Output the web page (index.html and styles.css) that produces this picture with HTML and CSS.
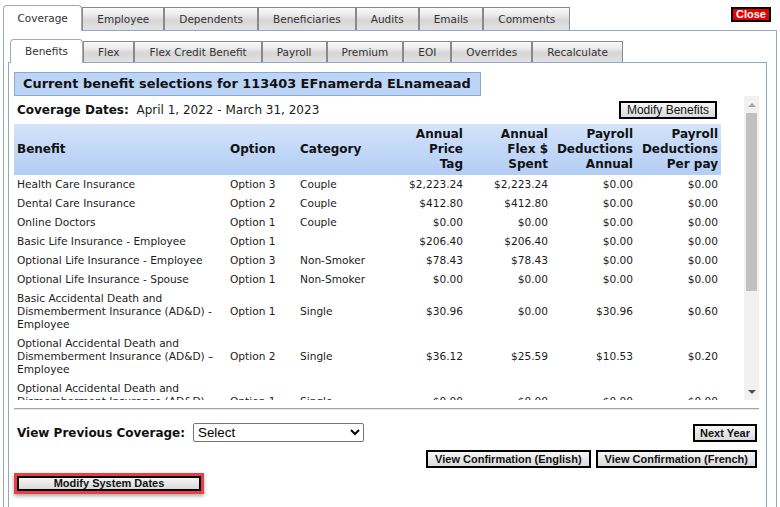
FILE: index.html
```html
<!DOCTYPE html>
<html lang="en">
<head>
<meta charset="utf-8">
<title>Coverage - Benefits</title>
<link rel="stylesheet" href="styles.css">
</head>
<body>
<div class="page">
  <div class="top-row">
    <nav class="tabs outer-tabs">
      <span class="tab active">Coverage</span>
      <span class="tab">Employee</span>
      <span class="tab">Dependents</span>
      <span class="tab">Beneficiaries</span>
      <span class="tab">Audits</span>
      <span class="tab">Emails</span>
      <span class="tab">Comments</span>
    </nav>
    <button class="close">Close</button>
  </div>
  <div class="outer-panel">
    <nav class="tabs inner-tabs">
      <span class="tab active">Benefits</span>
      <span class="tab">Flex</span>
      <span class="tab">Flex Credit Benefit</span>
      <span class="tab">Payroll</span>
      <span class="tab">Premium</span>
      <span class="tab">EOI</span>
      <span class="tab">Overrides</span>
      <span class="tab">Recalculate</span>
    </nav>
    <div class="inner-panel">
      <div class="title">Current benefit selections for 113403 EFnamerda ELnameaad</div>
      <div class="scroll-wrap">
        <div class="scroll">
          <div class="dates-row">
            <span class="dates"><b>Coverage Dates:</b>&nbsp; April 1, 2022 - March 31, 2023</span>
            <button class="btn btn-normal">Modify Benefits</button>
          </div>
          <table class="benefits">
            <colgroup>
              <col class="c-benefit"><col class="c-option"><col class="c-category">
              <col class="c-num"><col class="c-num"><col class="c-num"><col class="c-num">
            </colgroup>
            <thead>
              <tr>
                <th class="left">Benefit</th>
                <th class="left">Option</th>
                <th class="left">Category</th>
                <th>Annual<br>Price<br>Tag</th>
                <th>Annual<br>Flex $<br>Spent</th>
                <th>Payroll<br>Deductions<br>Annual</th>
                <th>Payroll<br>Deductions<br>Per pay</th>
              </tr>
            </thead>
            <tbody>
              <tr><td>Health Care Insurance</td><td>Option 3</td><td>Couple</td><td class="num">$2,223.24</td><td class="num">$2,223.24</td><td class="num">$0.00</td><td class="num">$0.00</td></tr>
              <tr><td>Dental Care Insurance</td><td>Option 2</td><td>Couple</td><td class="num">$412.80</td><td class="num">$412.80</td><td class="num">$0.00</td><td class="num">$0.00</td></tr>
              <tr><td>Online Doctors</td><td>Option 1</td><td>Couple</td><td class="num">$0.00</td><td class="num">$0.00</td><td class="num">$0.00</td><td class="num">$0.00</td></tr>
              <tr><td>Basic Life Insurance - Employee</td><td>Option 1</td><td></td><td class="num">$206.40</td><td class="num">$206.40</td><td class="num">$0.00</td><td class="num">$0.00</td></tr>
              <tr><td>Optional Life Insurance - Employee</td><td>Option 3</td><td>Non-Smoker</td><td class="num">$78.43</td><td class="num">$78.43</td><td class="num">$0.00</td><td class="num">$0.00</td></tr>
              <tr><td>Optional Life Insurance - Spouse</td><td>Option 1</td><td>Non-Smoker</td><td class="num">$0.00</td><td class="num">$0.00</td><td class="num">$0.00</td><td class="num">$0.00</td></tr>
              <tr><td>Basic Accidental Death and Dismemberment Insurance (AD&amp;D) - Employee</td><td>Option 1</td><td>Single</td><td class="num">$30.96</td><td class="num">$0.00</td><td class="num">$30.96</td><td class="num">$0.60</td></tr>
              <tr><td>Optional Accidental Death and Dismemberment Insurance (AD&amp;D) – Employee</td><td>Option 2</td><td>Single</td><td class="num">$36.12</td><td class="num">$25.59</td><td class="num">$10.53</td><td class="num">$0.20</td></tr>
              <tr><td>Optional Accidental Death and Dismemberment Insurance (AD&amp;D) – Spouse</td><td>Option 1</td><td>Single</td><td class="num">$0.00</td><td class="num">$0.00</td><td class="num">$0.00</td><td class="num">$0.00</td></tr>
              <tr><td>Optional Accidental Death and Dismemberment Insurance (AD&amp;D) – Child</td><td>Option 1</td><td>Single</td><td class="num">$0.00</td><td class="num">$0.00</td><td class="num">$0.00</td><td class="num">$0.00</td></tr>
              <tr><td>Long Term Disability</td><td>Option 1</td><td>Single</td><td class="num">$0.00</td><td class="num">$0.00</td><td class="num">$0.00</td><td class="num">$0.00</td></tr>
              <tr><td>Health Spending Account</td><td>Option 1</td><td></td><td class="num">$0.00</td><td class="num">$0.00</td><td class="num">$0.00</td><td class="num">$0.00</td></tr>
              <tr><td>Total</td><td></td><td></td><td class="num">$2,987.95</td><td class="num">$2,946.46</td><td class="num">$41.49</td><td class="num">$0.80</td></tr>
            </tbody>
          </table>
        </div>
        <div class="vscroll" aria-hidden="true">
          <span class="sb-btn up"></span>
          <span class="sb-thumb"></span>
          <span class="sb-track"></span>
          <span class="sb-btn down"></span>
        </div>
      </div>
      <hr class="divider">
      <div class="controls">
        <div class="ctrl-row first">
          <label class="prev-label" for="prev">View Previous Coverage:</label>
          <select id="prev" class="prev-select"><option>Select</option></select>
          <button class="btn btn-bold next">Next Year</button>
        </div>
        <div class="ctrl-row right">
          <button class="btn btn-bold">View Confirmation (English)</button>
          <button class="btn btn-bold">View Confirmation (French)</button>
        </div>
        <div class="ctrl-row last">
          <span class="highlight"><button class="btn btn-bold sysdates">Modify System Dates</button></span>
        </div>
      </div>
    </div>
  </div>
</div>
</body>
</html>
```
FILE: styles.css
```css
* { box-sizing: border-box; }
html, body { margin: 0; padding: 0; background: #fff; }
body {
  font-family: "DejaVu Sans", Verdana, sans-serif;
  color: #1c1c1c;
  height: 507px;
  overflow: hidden;
}
.page {
  padding: 5px 3px 0 3px;
}
.top-row {
  display: flex;
  align-items: flex-end;
  height: 25px;
}
.tabs {
  display: flex;
  align-items: flex-end;
}
.tab {
  display: flex;
  align-items: center;
  justify-content: center;
  padding: 0 14px;
  font-size: 10.5px;
  color: #333;
  border: 1px solid #8a8a8a;
  border-bottom: none;
  background: linear-gradient(to bottom, #fafafa 0%, #ececec 30%, #d6d6d6 55%, #e2e2e2 100%);
  white-space: nowrap;
}
.outer-tabs .tab { height: 23px; }
.outer-tabs .tab.active {
  height: 26px;
  margin-bottom: -1px;
  padding-bottom: 2px;
  padding: 0 13.5px 2px;
}
.inner-tabs .tab { height: 21px; }
.inner-tabs .tab.active {
  height: 24px;
  margin-bottom: -1px;
  padding-bottom: 2px;
}
.tab.active {
  background: #fff;
  border: 1px solid #a8a8a8;
  border-bottom: none;
  border-radius: 4px 4px 0 0;
  position: relative;
  z-index: 1;
}
.close {
  margin-left: auto;
  align-self: flex-start;
  margin-top: 2px;
  margin-right: 6px;
  height: 15px;
  padding: 0 3px;
  background: #e60000;
  color: #fff;
  border: 2px solid #000;
  font-family: "Liberation Sans", Arial, sans-serif;
  font-weight: bold;
  font-size: 11px;
  line-height: 11px;
  cursor: pointer;
}
.outer-panel {
  border: 1px solid #93a9bb;
  border-bottom: none;
  padding: 8px 9px 0 4px;
  height: 480px;
}
.inner-tabs {
  padding-left: 2px;
  height: 23px;
}
.inner-panel {
  border: 1px solid #93a9bb;
  border-bottom: none;
  padding: 9px 7px 0 5px;
  height: 460px;
}
.title {
  display: inline-block;
  height: 24px;
  line-height: 22px;
  padding: 0 9px 0 8px;
  background: #bcd4f6;
  border: 1px solid #8ba8d5;
  font-weight: bold;
  font-size: 12.9px;
  color: #111;
}
.scroll-wrap {
  display: flex;
  height: 304px;
}
.scroll {
  flex: 1;
  overflow-y: auto;
  overflow-x: hidden;
  scrollbar-width: none;
}
.vscroll {
  width: 15px;
  flex: none;
  display: flex;
  flex-direction: column;
  background: #f1f1f1;
}
.sb-btn {
  height: 17px;
  display: flex;
  align-items: center;
  justify-content: center;
}
.sb-btn.up::before {
  content: "";
  border-left: 4px solid transparent;
  border-right: 4px solid transparent;
  border-bottom: 4px solid #a3a3a3;
}
.sb-btn.down::before {
  content: "";
  border-left: 4px solid transparent;
  border-right: 4px solid transparent;
  border-top: 4px solid #505050;
}
.sb-thumb {
  height: 178px;
  margin: 0 2px;
  background: #c1c1c1;
}
.sb-track { flex: 1; }
.dates-row {
  width: 707px;
  height: 28px;
  display: flex;
  align-items: center;
  justify-content: space-between;
  padding: 0 4px 0 3px;
}
.dates { font-size: 12px; color: #1c1c1c; }
.dates b { color: #111; }
.btn {
  font-family: "Liberation Sans", Arial, sans-serif;
  color: #111;
  border: 2px solid #000;
  background: linear-gradient(to bottom, #f6f6f6, #dadada);
  height: 18px;
  padding: 0 7px;
  line-height: 14px;
  cursor: pointer;
  white-space: nowrap;
}
.btn-normal { font-size: 12px; padding: 0 6px; }
.btn-bold { font-size: 11px; font-weight: bold; }
.benefits {
  width: 707px;
  table-layout: fixed;
  border-collapse: collapse;
}
.c-benefit { width: 213px; }
.c-option { width: 70px; }
.c-category { width: 84px; }
.c-num { width: 85px; }
.benefits thead tr {
  background: linear-gradient(to bottom, #d4e4fb 0%, #c4d9f8 45%, #b3cdf4 100%);
}
.benefits th {
  font-size: 12px;
  font-weight: bold;
  color: #111;
  line-height: 15px;
  padding: 3px;
  text-align: right;
  vertical-align: middle;
}
.benefits th.left { text-align: left; }
.benefits td {
  font-size: 10.6px;
  line-height: 13px;
  padding: 3px;
  vertical-align: middle;
  color: #1c1c1c;
}
.benefits td.num { text-align: right; }
.divider {
  border: 0;
  border-top: 1px solid #a4a4a4;
  border-bottom: 1px solid #e8e8e8;
  height: 0;
  margin: 8px 0 0;
  width: 745px;
}
.controls { width: 745px; padding-right: 2px; }
.ctrl-row {
  display: flex;
  align-items: center;
  gap: 5px;
}
.ctrl-row.first { margin-top: 13px; height: 19px; }
.ctrl-row.right { justify-content: flex-end; margin-top: 8px; }
.ctrl-row.last { margin-top: 5px; }
.prev-label {
  font-size: 12px;
  font-weight: bold;
  color: #111;
  padding-left: 3px;
  margin-right: 3px;
}
.prev-select {
  width: 171px;
  height: 19px;
  font-family: "Liberation Sans", Arial, sans-serif;
  font-size: 13.33px;
  border: 1px solid #767676;
  border-radius: 2px;
  background: #fff;
  color: #000;
}
.next { margin-left: auto; padding: 0 5px; }
.highlight {
  display: inline-block;
  border: 3px solid #ec3c45;
  box-shadow: 0 2px 4px rgba(0,0,0,0.35);
}
.sysdates {
  width: 184px;
  height: 15px;
  line-height: 11px;
  display: block;
}
```
